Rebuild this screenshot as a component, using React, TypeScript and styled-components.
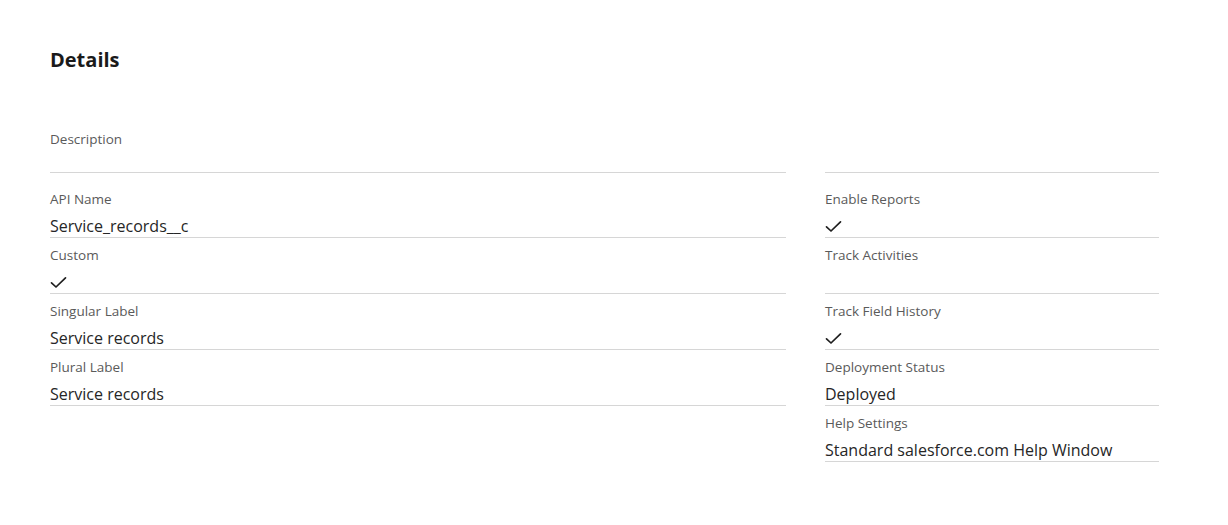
import styled, { createGlobalStyle } from "styled-components";

const GlobalStyle = createGlobalStyle`
  body {
    margin: 0;
    background: #ffffff;
    font-family: "Open Sans", "Noto Sans", sans-serif;
    color: #222222;
  }
`;

const Page = styled.div`
  padding: 46px 50px 0 50px;
  width: 1110px;
`;

const Title = styled.h2`
  margin: 0;
  font-size: 20px;
  line-height: 28px;
  font-weight: 700;
  color: #1a1a1a;
`;

const Columns = styled.div`
  display: grid;
  grid-template-columns: 736px 334px;
  column-gap: 39px;
  margin-top: 52px;
`;

const Column = styled.div`
  display: flex;
  flex-direction: column;
`;

const Row = styled.div<{ $lead?: boolean }>`
  display: flex;
  flex-direction: column;
  box-sizing: border-box;
  height: ${(p) => (p.$lead ? "47px" : "56px")};
  padding-top: ${(p) => (p.$lead ? "4px" : "8px")};
  margin-bottom: ${(p) => (p.$lead ? "9px" : "0")};
  border-bottom: 1px solid #d6d6d6;
`;

const Label = styled.div`
  font-size: 13.5px;
  line-height: 18px;
  color: #5a5a5a;
`;

const Value = styled.div`
  margin-top: 7px;
  font-size: 16px;
  line-height: 22px;
  height: 22px;
  color: #262626;
  display: flex;
  align-items: center;
`;

const Check = () => (
  <svg width="17" height="13" viewBox="0 0 17 13" fill="none">
    <path
      d="M1.5 6.8 L6 11 L15.5 1.8"
      stroke="#1f1f1f"
      strokeWidth="1.7"
      strokeLinecap="round"
      strokeLinejoin="round"
    />
  </svg>
);

type Field = { label?: string; value?: string; check?: boolean };

const left: Field[] = [
  { label: "Description" },
  { label: "API Name", value: "Service_records__c" },
  { label: "Custom", check: true },
  { label: "Singular Label", value: "Service records" },
  { label: "Plural Label", value: "Service records" },
];

const right: Field[] = [
  {},
  { label: "Enable Reports", check: true },
  { label: "Track Activities" },
  { label: "Track Field History", check: true },
  { label: "Deployment Status", value: "Deployed" },
  { label: "Help Settings", value: "Standard salesforce.com Help Window" },
];

const FieldColumn = ({ fields }: { fields: Field[] }) => (
  <Column>
    {fields.map((f, i) => (
      <Row key={i} $lead={i === 0}>
        <Label>{f.label ?? "\u00a0"}</Label>
        {i > 0 && <Value>{f.check ? <Check /> : f.value ?? "\u00a0"}</Value>}
      </Row>
    ))}
  </Column>
);

export default function App() {
  return (
    <>
      <GlobalStyle />
      <Page>
        <Title>Details</Title>
        <Columns>
          <FieldColumn fields={left} />
          <FieldColumn fields={right} />
        </Columns>
      </Page>
    </>
  );
}
